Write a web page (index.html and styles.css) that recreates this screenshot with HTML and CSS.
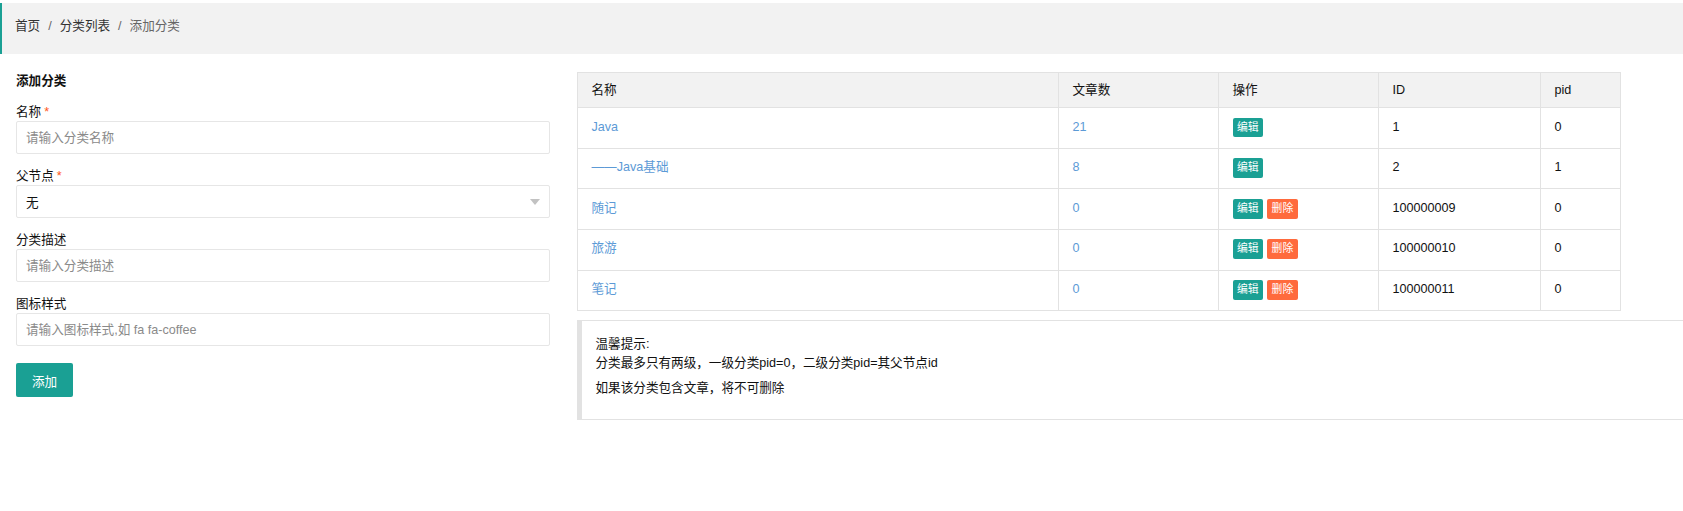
FILE: index.html
```html
<!DOCTYPE html>
<html lang="zh-CN">
<head>
<meta charset="utf-8">
<title>添加分类</title>
<link rel="stylesheet" href="styles.css">
</head>
<body>
<div class="crumb">
  <a class="crumb-link">首页</a><span class="crumb-sep">/</span><a class="crumb-link">分类列表</a><span class="crumb-sep">/</span><cite class="crumb-cur">添加分类</cite>
</div>
<div class="main">
  <div class="left">
    <div class="title">添加分类</div>
    <form class="form">
      <div class="field">
        <label class="label">名称<span class="req">*</span></label>
        <input class="input" type="text" placeholder="请输入分类名称">
      </div>
      <div class="field">
        <label class="label">父节点<span class="req">*</span></label>
        <div class="select"><span class="select-value">无</span><i class="select-arrow"></i></div>
      </div>
      <div class="field">
        <label class="label">分类描述</label>
        <input class="input" type="text" placeholder="请输入分类描述">
      </div>
      <div class="field">
        <label class="label">图标样式</label>
        <input class="input" type="text" placeholder="请输入图标样式,如 fa fa-coffee">
      </div>
      <button class="btn" type="button">添加</button>
    </form>
  </div>
  <div class="right">
    <table class="table">
      <colgroup>
        <col class="c-name"><col class="c-count"><col class="c-op"><col class="c-id"><col class="c-pid">
      </colgroup>
      <thead>
        <tr><th>名称</th><th>文章数</th><th>操作</th><th>ID</th><th>pid</th></tr>
      </thead>
      <tbody>
        <tr><td><a class="link">Java</a></td><td><a class="link">21</a></td><td><span class="tag tag-edit">编辑</span></td><td>1</td><td>0</td></tr>
        <tr><td><a class="link">——Java基础</a></td><td><a class="link">8</a></td><td><span class="tag tag-edit">编辑</span></td><td>2</td><td>1</td></tr>
        <tr><td><a class="link">随记</a></td><td><a class="link">0</a></td><td><span class="tag tag-edit">编辑</span><span class="tag tag-del">删除</span></td><td>100000009</td><td>0</td></tr>
        <tr><td><a class="link">旅游</a></td><td><a class="link">0</a></td><td><span class="tag tag-edit">编辑</span><span class="tag tag-del">删除</span></td><td>100000010</td><td>0</td></tr>
        <tr><td><a class="link">笔记</a></td><td><a class="link">0</a></td><td><span class="tag tag-edit">编辑</span><span class="tag tag-del">删除</span></td><td>100000011</td><td>0</td></tr>
      </tbody>
    </table>
    <blockquote class="quote">
      <p class="quote-line">温馨提示:</p>
      <p class="quote-line">分类最多只有两级，一级分类pid=0，二级分类pid=其父节点id</p>
      <p class="quote-line quote-last">如果该分类包含文章，将不可删除</p>
    </blockquote>
  </div>
</div>
</body>
</html>
```

FILE: styles.css
```css
html, body {
  margin: 0;
  padding: 0;
  overflow: hidden;
  background: #fff;
}

body {
  font-family: "Liberation Sans", Arial, "Noto Sans CJK SC", sans-serif;
  font-size: 12.6px;
  color: #333;
}

/* breadcrumb */
.crumb {
  margin-top: 3px;
  height: 51px;
  line-height: 47px;
  background: #f2f2f2;
  border-left: 2px solid #1aa094;
  padding-left: 13px;
  white-space: nowrap;
}

.crumb-link {
  color: #333;
  text-decoration: none;
}

.crumb-sep {
  margin: 0 8px;
  color: #666;
}

.crumb-cur {
  font-style: normal;
  color: #666;
}

/* layout */
.main {
  display: flex;
  padding: 18px 0 0 16px;
}

.left {
  width: 534px;
  flex: none;
}

.right {
  margin-left: 27px;
  flex: none;
  width: 1140px;
}

/* form */
.title {
  font-weight: bold;
  line-height: 18px;
  margin-bottom: 13px;
  color: #111;
}

.form {
  display: flex;
  flex-direction: column;
  gap: 13px;
  margin: 0;
}

.field {
  display: flex;
  flex-direction: column;
}

.label {
  line-height: 18px;
  color: #111;
}

.req {
  color: #ff5722;
  margin-left: 3px;
}

.input,
.select {
  box-sizing: border-box;
  height: 33px;
  width: 100%;
  border: 1px solid #e6e6e6;
  border-radius: 2px;
  padding: 0 9px;
  font-family: inherit;
  font-size: 12.6px;
  color: #333;
  background: #fff;
  outline: none;
}

.input::placeholder {
  color: #8a8a8a;
}

.select {
  position: relative;
  display: flex;
  align-items: center;
}

.select-value {
  color: #111;
}

.select-arrow {
  position: absolute;
  right: 9px;
  top: 50%;
  margin-top: -3px;
  width: 0;
  height: 0;
  border-left: 5.5px solid transparent;
  border-right: 5.5px solid transparent;
  border-top: 6px solid #c2c2c2;
}

.btn {
  align-self: flex-start;
  margin-top: 4px;
  height: 34px;
  padding: 0 16px;
  border: none;
  border-radius: 2px;
  background: #1aa094;
  color: #fff;
  font-family: inherit;
  font-size: 12.6px;
  cursor: pointer;
}

/* table */
.table {
  width: 1043px;
  table-layout: fixed;
  border-collapse: collapse;
  margin: 0 0 9px;
  color: #111;
}

.c-name { width: 481px; }
.c-count { width: 160px; }
.c-op { width: 160px; }
.c-id { width: 162px; }
.c-pid { width: 80px; }

.table th,
.table td {
  border: 1px solid #e2e2e2;
  text-align: left;
  padding: 8.1px 13.5px;
  line-height: 18px;
  font-weight: normal;
  white-space: nowrap;
}

.table th {
  background: #f2f2f2;
  color: #111;
}

.table td {
  padding-top: 9.4px;
  padding-bottom: 10.4px;
  line-height: 19.8px;
  vertical-align: top;
}

.link {
  color: #5c9ad6;
  text-decoration: none;
}

.tag {
  display: inline-block;
  vertical-align: top;
  height: 19.8px;
  line-height: 19.8px;
  padding: 0 4.5px;
  font-size: 10.8px;
  color: #fff;
  border-radius: 2px;
}

.tag + .tag {
  margin-left: 4px;
}

.tag-edit {
  background: #1aa094;
}

.tag-del {
  background: #ff6a3d;
}

/* quote */
.quote {
  margin: 0;
  width: 1130px;
  box-sizing: border-box;
  border-style: solid;
  border-color: #e2e2e2;
  border-width: 1px 1px 1px 5px;
  padding: 13.5px 13.5px 7px;
  line-height: 19.8px;
  color: #111;
}

.quote-line {
  margin: 0;
}

.quote-last {
  margin-top: 4.5px;
  margin-bottom: 13.5px;
}
```
